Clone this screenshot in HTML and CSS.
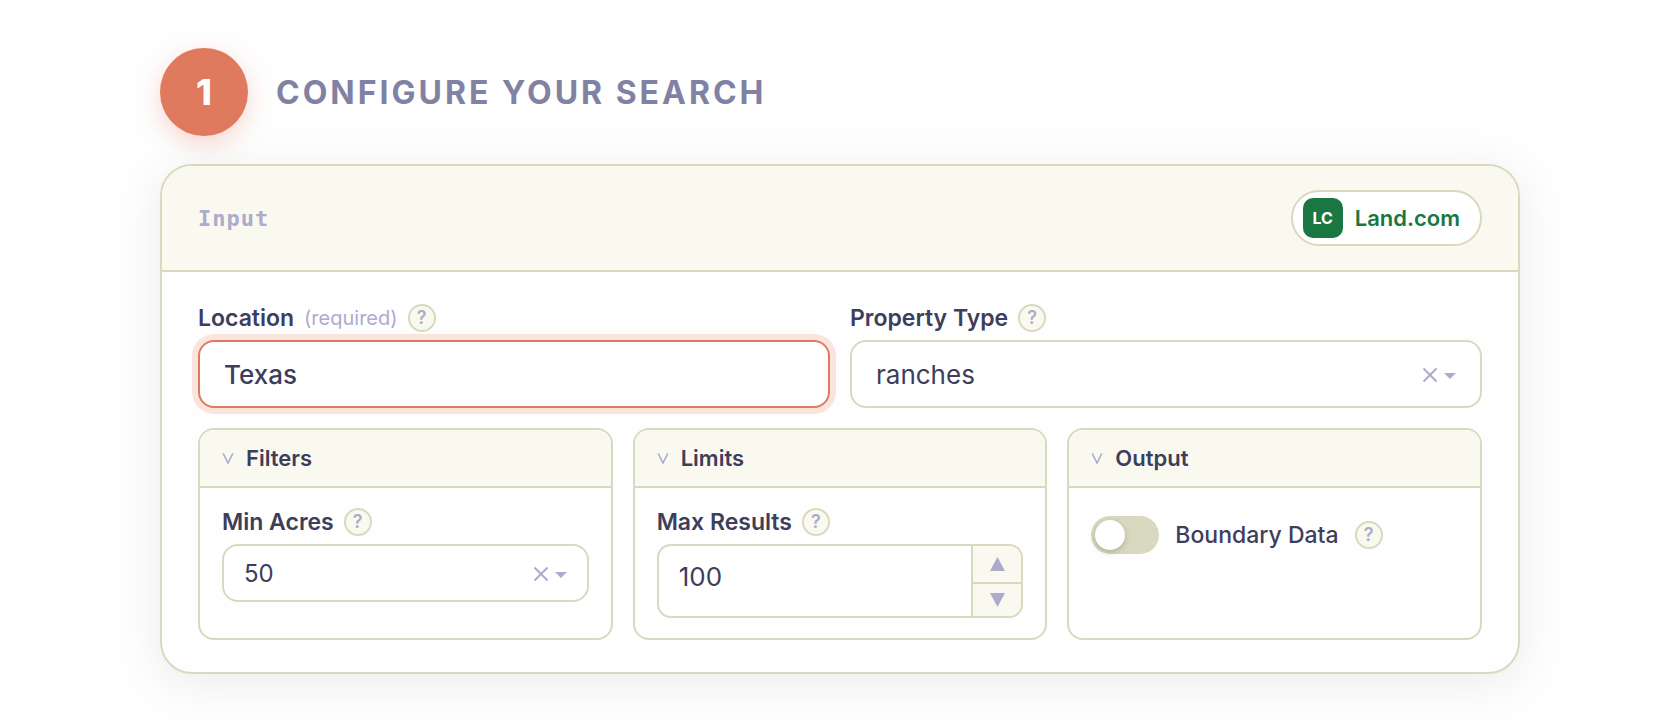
FILE: index.html
```html
<!DOCTYPE html>
<html lang="en">
<head>
    <meta charset="UTF-8">
    <meta name="viewport" content="width=device-width, initial-scale=1.0">
    <title>Configure your search</title>
    <link rel="stylesheet" href="styles.css">
</head>
<body>
    <main class="page">
        <div class="step-header">
            <span class="step-number">1</span>
            <h1 class="step-title">Configure your search</h1>
        </div>

        <form class="card">
            <div class="card-header">
                <span class="card-label">Input</span>
                <a class="brand" href="#">
                    <span class="brand-icon">LC</span>
                    <span class="brand-name">Land.com</span>
                </a>
            </div>

            <div class="card-body">
                <!-- Main fields -->
                <div class="row two-cols">
                    <div class="field">
                        <div class="field-label">
                            <label for="location">Location</label>
                            <span class="required">(required)</span>
                            <button type="button" class="help" aria-label="Help for location">?</button>
                        </div>
                        <input type="text" class="text-input focused" id="location" name="location" value="Texas" required>
                    </div>
                    <div class="field">
                        <div class="field-label">
                            <label for="propertyType">Property Type</label>
                            <button type="button" class="help" aria-label="Help for property type">?</button>
                        </div>
                        <div class="select-box">
                            <select id="propertyType" name="propertyType">
                                <option>ranches</option>
                            </select>
                            <button type="button" class="clear" aria-label="Clear property type">
                                <svg width="16" height="16" viewBox="0 0 16 16"><path d="M1.5 1.5l13 13M14.5 1.5l-13 13"/></svg>
                            </button>
                            <svg class="caret" width="12" height="6" viewBox="0 0 12 6"><path d="M0 0h12L6 6z"/></svg>
                        </div>
                    </div>
                </div>

                <!-- Option panels -->
                <div class="row three-cols">
                    <section class="panel">
                        <h2 class="panel-header">
                            <svg class="chevron" width="12" height="12" viewBox="0 0 12 12"><path d="M1.2 1.5L6 11 10.800 1.500"/></svg>
                            Filters
                        </h2>
                        <div class="panel-body">
                            <div class="field-label">
                                <label for="minAcres">Min Acres</label>
                                <button type="button" class="help" aria-label="Help for min acres">?</button>
                            </div>
                            <div class="select-box small">
                                <select id="minAcres" name="minAcres">
                                    <option>50</option>
                                </select>
                                <button type="button" class="clear" aria-label="Clear min acres">
                                    <svg width="16" height="16" viewBox="0 0 16 16"><path d="M1.5 1.5l13 13M14.5 1.5l-13 13"/></svg>
                                </button>
                                <svg class="caret" width="12" height="6" viewBox="0 0 12 6"><path d="M0 0h12L6 6z"/></svg>
                            </div>
                        </div>
                    </section>

                    <section class="panel">
                        <h2 class="panel-header">
                            <svg class="chevron" width="12" height="12" viewBox="0 0 12 12"><path d="M1.2 1.5L6 11 10.800 1.500"/></svg>
                            Limits
                        </h2>
                        <div class="panel-body">
                            <div class="field-label">
                                <label for="maxResults">Max Results</label>
                                <button type="button" class="help" aria-label="Help for max results">?</button>
                            </div>
                            <div class="number-box">
                                <input type="number" id="maxResults" name="maxResults" value="100">
                                <div class="number-buttons">
                                    <button type="button" id="increase" aria-label="Increase">
                                        <svg width="15" height="14" viewBox="0 0 15 14"><path d="M7.5 0L15 14H0z"/></svg>
                                    </button>
                                    <button type="button" id="decrease" aria-label="Decrease">
                                        <svg width="15" height="14" viewBox="0 0 15 14"><path d="M0 0h15L7.5 14z"/></svg>
                                    </button>
                                </div>
                            </div>
                        </div>
                    </section>

                    <section class="panel">
                        <h2 class="panel-header">
                            <svg class="chevron" width="12" height="12" viewBox="0 0 12 12"><path d="M1.2 1.5L6 11 10.800 1.500"/></svg>
                            Output
                        </h2>
                        <div class="panel-body">
                            <div class="toggle-row">
                                <input type="checkbox" class="toggle" id="boundaryData" name="boundaryData">
                                <label for="boundaryData">Boundary Data</label>
                                <button type="button" class="help" aria-label="Help for boundary data">?</button>
                            </div>
                        </div>
                    </section>
                </div>
            </div>
        </form>
    </main>

    <script>
        const maxResults = document.getElementById('maxResults');

        document.getElementById('increase').addEventListener('click', () => maxResults.stepUp());
        document.getElementById('decrease').addEventListener('click', () => maxResults.stepDown());
    </script>
</body>
</html>
```
FILE: styles.css
```css
* {
    box-sizing: border-box;
}

body {
    margin: 0;
    background-color: #fefefe;
    color: #3d3d5c;
    font-family: Inter, "Liberation Sans", sans-serif;
    font-size: 22px;
}

button,
input,
select {
    font-family: inherit;
    color: inherit;
}

button {
    padding: 0;
    border: none;
    background: none;
    cursor: pointer;
}

.page {
    max-width: 1408px;
    margin: 0 auto;
    padding: 48px 24px;
}

/* Step heading */
.step-header {
    display: flex;
    align-items: center;
    gap: 28px;
    margin-bottom: 28px;
}

.step-number {
    display: flex;
    align-items: center;
    justify-content: center;
    width: 88px;
    height: 88px;
    border-radius: 50%;
    background-color: #e07a5f;
    color: #fff;
    font-size: 36px;
    font-weight: 800;
    box-shadow: 0 8px 24px rgba(224, 122, 95, 0.3);
}

.step-title {
    margin: 0;
    color: #8182a3;
    font-size: 32px;
    font-weight: 700;
    letter-spacing: 3px;
    text-transform: uppercase;
}

/* Card */
.card {
    border: 2px solid #d9d9c0;
    border-radius: 32px;
    background-color: #fefefe;
    box-shadow: 0 8px 48px rgba(0, 0, 0, 0.08);
    overflow: hidden;
}

.card-header {
    display: flex;
    align-items: center;
    justify-content: space-between;
    padding: 24px 36px;
    border-bottom: 2px solid #d9d9c0;
    background-color: #f9f9ef;
}

.card-label {
    color: #adabcb;
    font-family: "DejaVu Sans Mono", monospace;
    font-weight: 700;
    letter-spacing: 1px;
}

.brand {
    display: flex;
    align-items: center;
    gap: 12px;
    padding: 6px 20px 6px 10px;
    border: 2px solid #d9d9c0;
    border-radius: 28px;
    background-color: #fff;
    color: #1a7742;
    font-weight: 600;
    text-decoration: none;
}

.brand-icon {
    display: flex;
    align-items: center;
    justify-content: center;
    width: 40px;
    height: 40px;
    border-radius: 10px;
    background-color: #1a7742;
    color: #fff;
    font-size: 16px;
    font-weight: 700;
}

.card-body {
    display: grid;
    gap: 20px;
    padding: 32px 36px;
}

.row {
    display: grid;
    gap: 20px;
}

.two-cols {
    grid-template-columns: 1fr 1fr;
}

.three-cols {
    grid-template-columns: repeat(3, 1fr);
}

/* Fields */
.field-label {
    display: flex;
    align-items: center;
    gap: 10px;
    height: 28px;
    margin-bottom: 8px;
    font-size: 23px;
    font-weight: 600;
}

.required {
    color: #adabcb;
    font-size: 20px;
    font-weight: 400;
}

.help {
    width: 28px;
    height: 28px;
    border: 2px solid #d9d9c0;
    border-radius: 50%;
    background-color: #f9f9ef;
    color: #adabcb;
    font-size: 18px;
    font-weight: 600;
    line-height: 24px;
}

.text-input,
.select-box {
    width: 100%;
    height: 68px;
    border: 2px solid #d9d9c0;
    border-radius: 16px;
    background-color: #fff;
    font-size: 26px;
}

.text-input {
    padding: 0 24px;
    font-weight: 500;
    outline: none;
}

.text-input.focused,
.text-input:focus {
    border-color: #e07a5f;
    box-shadow: 0 0 0 6px #fae4de;
}

.select-box {
    display: flex;
    align-items: center;
    gap: 6px;
    padding: 0 24px;
}

.select-box.small {
    height: 58px;
    padding: 0 20px;
    font-size: 24px;
}

.select-box select {
    flex: 1;
    min-width: 0;
    height: 100%;
    padding: 0;
    border: none;
    outline: none;
    background: none;
    font-size: inherit;
    appearance: none;
}

.clear {
    display: flex;
    margin-top: 2px;
}

.clear svg {
    fill: none;
    stroke: #adabcb;
    stroke-width: 2;
}

.caret {
    margin-top: 4px;
    fill: #adabcb;
}

/* Panels */
.panel {
    border: 2px solid #d9d9c0;
    border-radius: 16px;
    overflow: hidden;
}

.panel-header {
    display: flex;
    align-items: center;
    gap: 12px;
    height: 58px;
    margin: 0;
    padding: 0 22px;
    border-bottom: 2px solid #d9d9c0;
    background-color: #f9f9ef;
    font-size: 22px;
    font-weight: 600;
}

.chevron {
    fill: none;
    stroke: #adabcb;
    stroke-width: 1.6;
}

.panel-body {
    padding: 20px 22px;
}

/* Number input */
.number-box {
    display: flex;
    height: 74px;
    border: 2px solid #d9d9c0;
    border-radius: 14px;
    background-color: #fff;
    overflow: hidden;
}

.number-box input {
    flex: 1;
    min-width: 0;
    height: 60px;
    padding: 0 20px;
    border: none;
    outline: none;
    background: none;
    font-size: 26px;
    appearance: textfield;
}

.number-box input::-webkit-inner-spin-button {
    display: none;
}

.number-buttons {
    display: grid;
    grid-template-rows: 38px 1fr;
    width: 50px;
    border-left: 2px solid #d9d9c0;
    background-color: #f9f9ef;
}

.number-buttons button {
    display: flex;
    align-items: center;
    justify-content: center;
}

.number-buttons button:first-child {
    border-bottom: 2px solid #d9d9c0;
}

.number-buttons svg {
    fill: #adabcb;
}

/* Toggle */
.toggle-row {
    display: flex;
    align-items: center;
    gap: 16px;
    padding: 8px 0;
    font-size: 23px;
    font-weight: 500;
}

.toggle {
    width: 68px;
    height: 38px;
    margin: 0;
    padding: 4px;
    border-radius: 19px;
    background-color: #d9d9c0;
    appearance: none;
    cursor: pointer;
}

.toggle::before {
    content: "";
    display: block;
    width: 30px;
    height: 30px;
    border-radius: 50%;
    background-color: #fff;
    box-shadow: 0 2px 6px rgba(0, 0, 0, 0.2);
}

.toggle:checked {
    background-color: #e07a5f;
}

.toggle:checked::before {
    margin-left: auto;
}
```
